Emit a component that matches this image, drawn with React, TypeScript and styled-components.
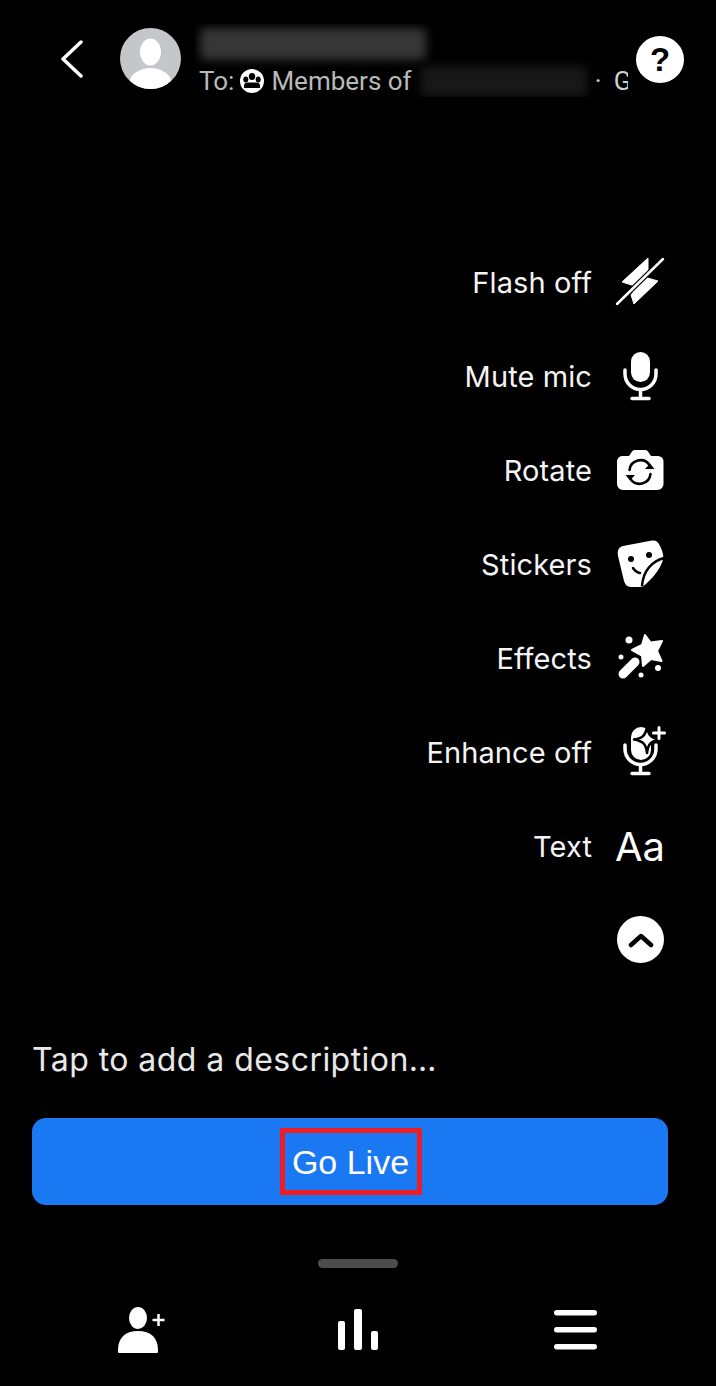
import styled, { createGlobalStyle } from 'styled-components';
import type { ReactNode } from 'react';

const GlobalStyle = createGlobalStyle`
  html, body {
    margin: 0;
    padding: 0;
    background: #000;
  }
`;

const Page = styled.div`
  width: 716px;
  height: 1386px;
  box-sizing: border-box;
  padding-top: 24px;
  background: #000;
  color: #fff;
  font-family: Inter, "Liberation Sans", sans-serif;
  overflow: hidden;
  display: flex;
  flex-direction: column;
`;

const Header = styled.header`
  display: flex;
  align-items: flex-start;
  height: 65px;
  padding-left: 58px;
`;

const BackButton = styled.div`
  width: 62px;
  height: 65px;
  flex: none;
  padding-top: 16px;
  box-sizing: border-box;
`;

const Avatar = styled.div`
  width: 61px;
  height: 61px;
  margin-top: 4px;
  flex: none;
  border-radius: 50%;
  overflow: hidden;
`;

const HeaderInfo = styled.div`
  width: 433px;
  margin-left: 14px;
  flex: none;
  overflow: hidden;
`;

const BlurredName = styled.div`
  width: 226px;
  height: 32px;
  margin: 4px 0 0 5px;
  background: #363636;
  border-radius: 6px;
  filter: blur(5px);
`;

const SubLine = styled.div`
  display: flex;
  align-items: center;
  height: 32px;
  margin-top: 5px;
  padding-left: 4px;
  font-family: Roboto, sans-serif;
  font-size: 26px;
  color: #b9b9b9;
  white-space: nowrap;
`;

const GroupGlyph = styled.svg`
  width: 24px;
  height: 24px;
  margin: 0 7px 0 6px;
  flex: none;
`;

const BlurredOrg = styled.div`
  width: 166px;
  height: 30px;
  margin: 0 8px 0 9px;
  flex: none;
  background: #181818;
  border-radius: 4px;
  filter: blur(5px);
`;

const Trailing = styled.span`
  word-spacing: 6px;
  color: #d0d0d0;
`;

const HelpButton = styled.div`
  width: 48px;
  height: 47px;
  margin: 12px 0 0 8px;
  flex: none;
  border-radius: 50%;
  background: #fff;
  color: #000;
  display: flex;
  align-items: center;
  justify-content: center;
  font: 700 33px "Liberation Sans", sans-serif;
`;

const ToolList = styled.div`
  margin-top: 147px;
  display: flex;
  flex-direction: column;
  padding-right: 48px;
`;

const ToolRow = styled.div`
  height: 93.86px;
  display: flex;
  align-items: center;
  justify-content: flex-end;
`;

const ToolLabel = styled.span`
  font-size: 29px;
  letter-spacing: 0.1px;
  color: #f4f4f4;
`;

const ToolIcon = styled.div`
  width: 56px;
  height: 56px;
  margin-left: 20px;
  flex: none;
  display: flex;
  align-items: center;
  justify-content: center;
`;

const AaGlyph = styled.span`
  font: 400 40px Inter, sans-serif;
  color: #fff;
`;

const Collapse = styled.div`
  width: 47px;
  height: 47px;
  margin-right: 4px;
  border-radius: 50%;
  background: #fff;
  display: flex;
  align-items: center;
  justify-content: center;
`;

const Description = styled.div`
  margin: 53px 0 0 32px;
  height: 40px;
  line-height: 40px;
  font-size: 32px;
  letter-spacing: 0.45px;
  color: #e8e8e8;
`;

const GoLiveButton = styled.div`
  margin: 38px 48px 0 32px;
  height: 87px;
  border-radius: 14px;
  background: #1b78f3;
  display: flex;
  align-items: center;
  justify-content: center;
`;

const RedHighlight = styled.div`
  width: 142px;
  height: 67px;
  box-sizing: border-box;
  border: 5px solid #ee1c25;
  padding-top: 3px;
  display: flex;
  align-items: center;
  justify-content: center;
  font: 400 34px "Liberation Sans", sans-serif;
  color: #fff;
  margin-left: 1px;
`;

const Handle = styled.div`
  width: 80px;
  height: 9px;
  margin: 54px 0 0 318px;
  border-radius: 5px;
  background: #4d4d4f;
`;

const BottomBar = styled.nav`
  margin-top: 38px;
  padding-left: 115px;
  display: flex;
  align-items: flex-start;
`;

const BottomIcon = styled.svg<{ $gap: number }>`
  width: 52px;
  height: 50px;
  flex: none;
  margin-right: ${(p) => p.$gap}px;
`;

const Icon = ({ children }: { children: ReactNode }) => (
  <svg width="56" height="56" viewBox="0 0 56 56" fill="#fff">
    {children}
  </svg>
);

const FlashIcon = () => (
  <Icon>
    <path d="M36 3 10 27l13 4-2 6L36 17z" stroke="#fff" strokeLinejoin="round" />
    <path d="M46 26 32 22 19 40l3 9z" stroke="#fff" strokeLinejoin="round" />
    <path d="M51 4 5 49" stroke="#000" strokeWidth="5" />
    <path d="M51 4 5 49" stroke="#fff" strokeWidth="2.500" strokeLinecap="round" />
  </Icon>
);

const MicIcon = () => (
  <Icon>
    <rect x="19" y="3" width="19" height="30" rx="9.500" />
    <path d="M13 21v4a15.500 15.500 0 0 0 31 0v-4" fill="none" stroke="#fff" strokeWidth="3.500" strokeLinecap="round" />
    <path d="M28.500 41v8M20 49.500h17" fill="none" stroke="#fff" strokeWidth="3.500" strokeLinecap="round" />
  </Icon>
);

const RotateIcon = () => (
  <Icon>
    <path d="M10 13h7l3-4.500a3 3 0 0 1 2.500-1.500h11a3 3 0 0 1 2.500 1.500L39 13h7a5.500 5.500 0 0 1 5.500 5.500V41a6 6 0 0 1-6 6H11a6 6 0 0 1-6-6V18.500A5.500 5.500 0 0 1 10 13z" />
    <path d="M17.500 27a11 11 0 0 1 20-5M38.500 31a11 11 0 0 1-20 5" fill="none" stroke="#000" strokeWidth="2.500" strokeLinecap="round" />
    <path d="M33 26h9.500l-4.500-5.500zM23 32h-9.500l4.500 5.500z" fill="#000" />
  </Icon>
);

const StickerIcon = () => (
  <Icon>
    <path d="M11 9 40 3.500C44 3 46 5 47.500 8 50 13 52 18 51 22 50 28 44 38 34 47 31 50 28 50 25 50H19C15 50 13 47 12 44L6 19C5 13 7 10 11 9z" />
    <circle cx="19" cy="22" r="3" fill="#000" />
    <circle cx="37" cy="18" r="3" fill="#000" />
    <path d="M21 31c2 3 4 4.500 7 5" fill="none" stroke="#000" strokeWidth="2.500" strokeLinecap="round" />
    <path d="M52 21C40 24 31 34 30 49" fill="none" stroke="#000" strokeWidth="2.500" />
  </Icon>
);

const EffectsIcon = () => (
  <Icon>
    <path d="M33 5l5.500 7.500L50 11l-5 10 4.500 10-10.500-2-8 7-1-10.500-10-5.500 10-5z" stroke="#fff" strokeWidth="2" strokeLinejoin="round" />
    <path d="M23 32 11 44" stroke="#fff" strokeWidth="9" strokeLinecap="round" />
    <circle cx="17" cy="10" r="3.500" />
    <circle cx="9" cy="27" r="2.500" />
    <circle cx="46" cy="38" r="3" />
    <circle cx="29" cy="45" r="2.500" />
  </Icon>
);

const EnhanceIcon = () => (
  <Icon>
    <rect x="19" y="3" width="20" height="33" rx="10" />
    <path d="M13 21v4a15.500 15.500 0 0 0 31 0v-4" fill="none" stroke="#fff" strokeWidth="3.500" strokeLinecap="round" />
    <path d="M28.500 41v8M20 49.500h17" fill="none" stroke="#fff" strokeWidth="3.500" strokeLinecap="round" />
    <path d="M35 2c1 9 4 12 13 13.500-9 1.500-12 4.500-13 13.500-1-9-4-12-13-13.500C31 14 34 11 35 2z" stroke="#000" strokeWidth="2.500" strokeLinejoin="round" />
    <path d="M47 3.500v11M41.500 9h11" stroke="#fff" strokeWidth="3" strokeLinecap="round" />
  </Icon>
);

const tools: { label: string; icon: ReactNode }[] = [
  { label: 'Flash off', icon: <FlashIcon /> },
  { label: 'Mute mic', icon: <MicIcon /> },
  { label: 'Rotate', icon: <RotateIcon /> },
  { label: 'Stickers', icon: <StickerIcon /> },
  { label: 'Effects', icon: <EffectsIcon /> },
  { label: 'Enhance off', icon: <EnhanceIcon /> },
  { label: 'Text', icon: <AaGlyph>Aa</AaGlyph> },
];

export default function App() {
  return (
    <>
      <GlobalStyle />
      <Page>
        <Header>
          <BackButton>
            <svg width="30" height="38" viewBox="0 0 30 38" fill="none">
              <path d="M23 2 5 19l18 17" stroke="#fff" strokeWidth="3.500" strokeLinecap="round" strokeLinejoin="round" />
            </svg>
          </BackButton>
          <Avatar>
            <svg width="61" height="61" viewBox="0 0 61 61">
              <rect width="61" height="61" fill="#c5c6c9" />
              <ellipse cx="30.500" cy="24" rx="10.500" ry="13.500" fill="#fff" />
              <ellipse cx="30.500" cy="55" rx="21" ry="15" fill="#fff" />
            </svg>
          </Avatar>
          <HeaderInfo>
            <BlurredName />
            <SubLine>
              To:
              <GroupGlyph viewBox="0 0 24 24">
                <circle cx="12" cy="12" r="12" fill="#fff" />
                <ellipse cx="12" cy="7.500" rx="3.200" ry="3.500" fill="#000" />
                <ellipse cx="5.800" cy="10.500" rx="2.500" ry="3" fill="#000" />
                <ellipse cx="18.200" cy="10.500" rx="2.500" ry="3" fill="#000" />
                <path d="M4 17c0-3 2-3.500 4-3.500h8c2 0 4 .5 4 3.500v2H4z" fill="#000" />
              </GroupGlyph>
              Members of
              <BlurredOrg />
              <Trailing>· G</Trailing>
            </SubLine>
          </HeaderInfo>
          <HelpButton>?</HelpButton>
        </Header>

        <ToolList>
          {tools.map((tool) => (
            <ToolRow key={tool.label}>
              <ToolLabel>{tool.label}</ToolLabel>
              <ToolIcon>{tool.icon}</ToolIcon>
            </ToolRow>
          ))}
          <ToolRow>
            <Collapse>
              <svg width="26" height="16" viewBox="0 0 26 16" fill="none">
                <path d="M3 13 13 4l10 9" stroke="#000" strokeWidth="4.500" strokeLinecap="round" strokeLinejoin="round" />
              </svg>
            </Collapse>
          </ToolRow>
        </ToolList>

        <Description>Tap to add a description…</Description>

        <GoLiveButton>
          <RedHighlight>Go Live</RedHighlight>
        </GoLiveButton>

        <Handle />

        <BottomBar>
          <BottomIcon $gap={169} viewBox="0 0 52 50" fill="#fff">
            <ellipse cx="23" cy="12" rx="9" ry="11" />
            <path d="M4 47c-1 0-1-1-1-3 0-12 7-19 20-19s20 7 20 19c0 2 0 3-1 3z" />
            <path d="M43.500 8v12M37.500 14h12" stroke="#fff" strokeWidth="2.500" />
          </BottomIcon>
          <BottomIcon $gap={166} viewBox="0 0 52 50" fill="#fff">
            <rect x="2" y="15" width="7" height="29" rx="2" />
            <rect x="18" y="3" width="8" height="41" rx="2" />
            <rect x="35" y="25" width="7" height="19" rx="2" />
          </BottomIcon>
          <BottomIcon $gap={0} viewBox="0 0 52 50" fill="#fff">
            <rect x="0" y="4" width="43" height="5.500" rx="2.700" />
            <rect x="0" y="21" width="43" height="5.500" rx="2.700" />
            <rect x="0" y="38" width="43" height="5.500" rx="2.700" />
          </BottomIcon>
        </BottomBar>
      </Page>
    </>
  );
}
